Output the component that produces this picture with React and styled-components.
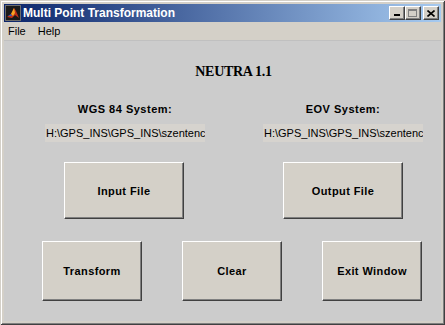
import React from "react"
import styled, { createGlobalStyle } from "styled-components"

const Global = createGlobalStyle`
  html, body { margin: 0; padding: 0; background: #d4d0c8; }
  body { font-family: "Liberation Sans", Arial, sans-serif; }
`

const Window = styled.div`
  width: 445px;
  height: 325px;
  box-sizing: border-box;
  padding: 4px;
  background: #d4d0c8;
  box-shadow: inset 1px 1px #d4d0c8, inset -1px -1px #404040,
    inset 2px 2px #ffffff, inset -2px -2px #808080;
  display: flex;
  flex-direction: column;
`

const TitleBar = styled.div`
  height: 18px;
  display: flex;
  align-items: center;
  background: linear-gradient(to right, #0a246a, #a6caf0);
  padding-left: 1px;
  padding-right: 2px;
`

const Title = styled.span`
  flex: 1;
  color: #fff;
  font-weight: bold;
  font-size: 12px;
  margin-left: 2px;
  white-space: nowrap;
`

const CapButton = styled.div`
  width: 16px;
  height: 14px;
  box-sizing: border-box;
  background: #d4d0c8;
  border: 1px solid;
  border-color: #fff #404040 #404040 #fff;
  box-shadow: inset -1px -1px #808080;
  margin-left: ${p => (p.gap ? "2px" : "0")};
  display: flex;
  align-items: center;
  justify-content: center;
`

const MenuBar = styled.div`
  height: 18px;
  display: flex;
  align-items: center;
  font-size: 11px;
  color: #000;
  padding-left: 4px;
  border-bottom: 1px solid #c0c0c0;
`

const MenuItem = styled.span`
  margin-right: 12px;
`

const Content = styled.div`
  flex: 1;
  background: #cccccc;
  display: flex;
  flex-direction: column;
`

const Heading = styled.div`
  margin-top: 23px;
  text-align: center;
  padding-left: 22px;
  font-family: "Liberation Serif", "Times New Roman", serif;
  font-weight: bold;
  font-size: 14px;
  line-height: 16px;
  letter-spacing: -0.3px;
`

const Columns = styled.div`
  display: grid;
  grid-template-columns: 160px 160px;
  column-gap: 58px;
  padding-left: 41px;
  margin-top: 22px;
`

const Column = styled.div`
  display: flex;
  flex-direction: column;
  align-items: center;
`

const Label = styled.div`
  font-weight: bold;
  font-size: 11px;
  line-height: 14px;
  letter-spacing: 0.5px;
`

const Field = styled.div`
  margin-top: 8px;
  align-self: stretch;
  height: 18px;
  background: #d6d3ce;
  font-size: 11px;
  line-height: 18px;
  padding-left: 1px;
  white-space: nowrap;
  overflow: hidden;
`

const Button = styled.div`
  width: ${p => p.w}px;
  height: ${p => p.h}px;
  box-sizing: border-box;
  background: #d4d0c8;
  border: 1px solid;
  border-color: #fff #404040 #404040 #fff;
  box-shadow: inset -1px -1px #808080;
  display: flex;
  align-items: center;
  justify-content: center;
  font-weight: bold;
  font-size: 11px;
  letter-spacing: 0.4px;
  color: #000;
`

const BigButton = styled(Button)`
  margin-top: 20px;
  margin-left: ${p => p.shift || 0}px;
`

const BottomRow = styled.div`
  display: flex;
  gap: 40px;
  padding-left: 38px;
  margin-top: 22px;
`

const MatlabIcon = () => (
  <svg width="16" height="16" viewBox="0 0 16 16">
    <rect x="0" y="0" width="16" height="16" fill="#1a1a1a" />
    <rect x="0.5" y="0.5" width="15" height="15" fill="none" stroke="#6b6b6b" />
    <path d="M2 12 L6 9 L9 3 L11 6 L14 13 L10 10 L7 13 Z" fill="#c0301a" />
    <path d="M6 9 L9 3 L10 8 L8 11 Z" fill="#f5a623" />
    <path d="M3 11 L6 9 L7 11 Z" fill="#3060c0" />
  </svg>
)

const App = () => {
  return (
    <Window>
      <Global />
      <TitleBar>
        <MatlabIcon />
        <Title>Multi Point Transformation</Title>
        <CapButton>
          <svg width="8" height="8"><rect x="1" y="5" width="6" height="2" fill="#000" /></svg>
        </CapButton>
        <CapButton>
          <svg width="10" height="9"><rect x="0.5" y="0.5" width="8" height="7" fill="none" stroke="#808080" /><rect x="0" y="0" width="9" height="2" fill="#808080" /></svg>
        </CapButton>
        <CapButton gap>
          <svg width="8" height="7"><path d="M0.5 0.5 L7.5 6.5 M7.5 0.5 L0.5 6.5" stroke="#000" strokeWidth="1.6" /></svg>
        </CapButton>
      </TitleBar>
      <MenuBar>
        <MenuItem>File</MenuItem>
        <MenuItem>Help</MenuItem>
      </MenuBar>
      <Content>
        <Heading>NEUTRA 1.1</Heading>
        <Columns>
          <Column>
            <Label>WGS 84 System:</Label>
            <Field>H:\GPS_INS\GPS_INS\szentenc</Field>
            <BigButton w={120} h={57} shift={-2}>Input File</BigButton>
          </Column>
          <Column>
            <Label>EOV System:</Label>
            <Field>H:\GPS_INS\GPS_INS\szentenc</Field>
            <BigButton w={120} h={57}>Output File</BigButton>
          </Column>
        </Columns>
        <BottomRow>
          <Button w={100} h={60}>Transform</Button>
          <Button w={100} h={60}>Clear</Button>
          <Button w={100} h={60}>Exit Window</Button>
        </BottomRow>
      </Content>
    </Window>
  )
}

export default App
